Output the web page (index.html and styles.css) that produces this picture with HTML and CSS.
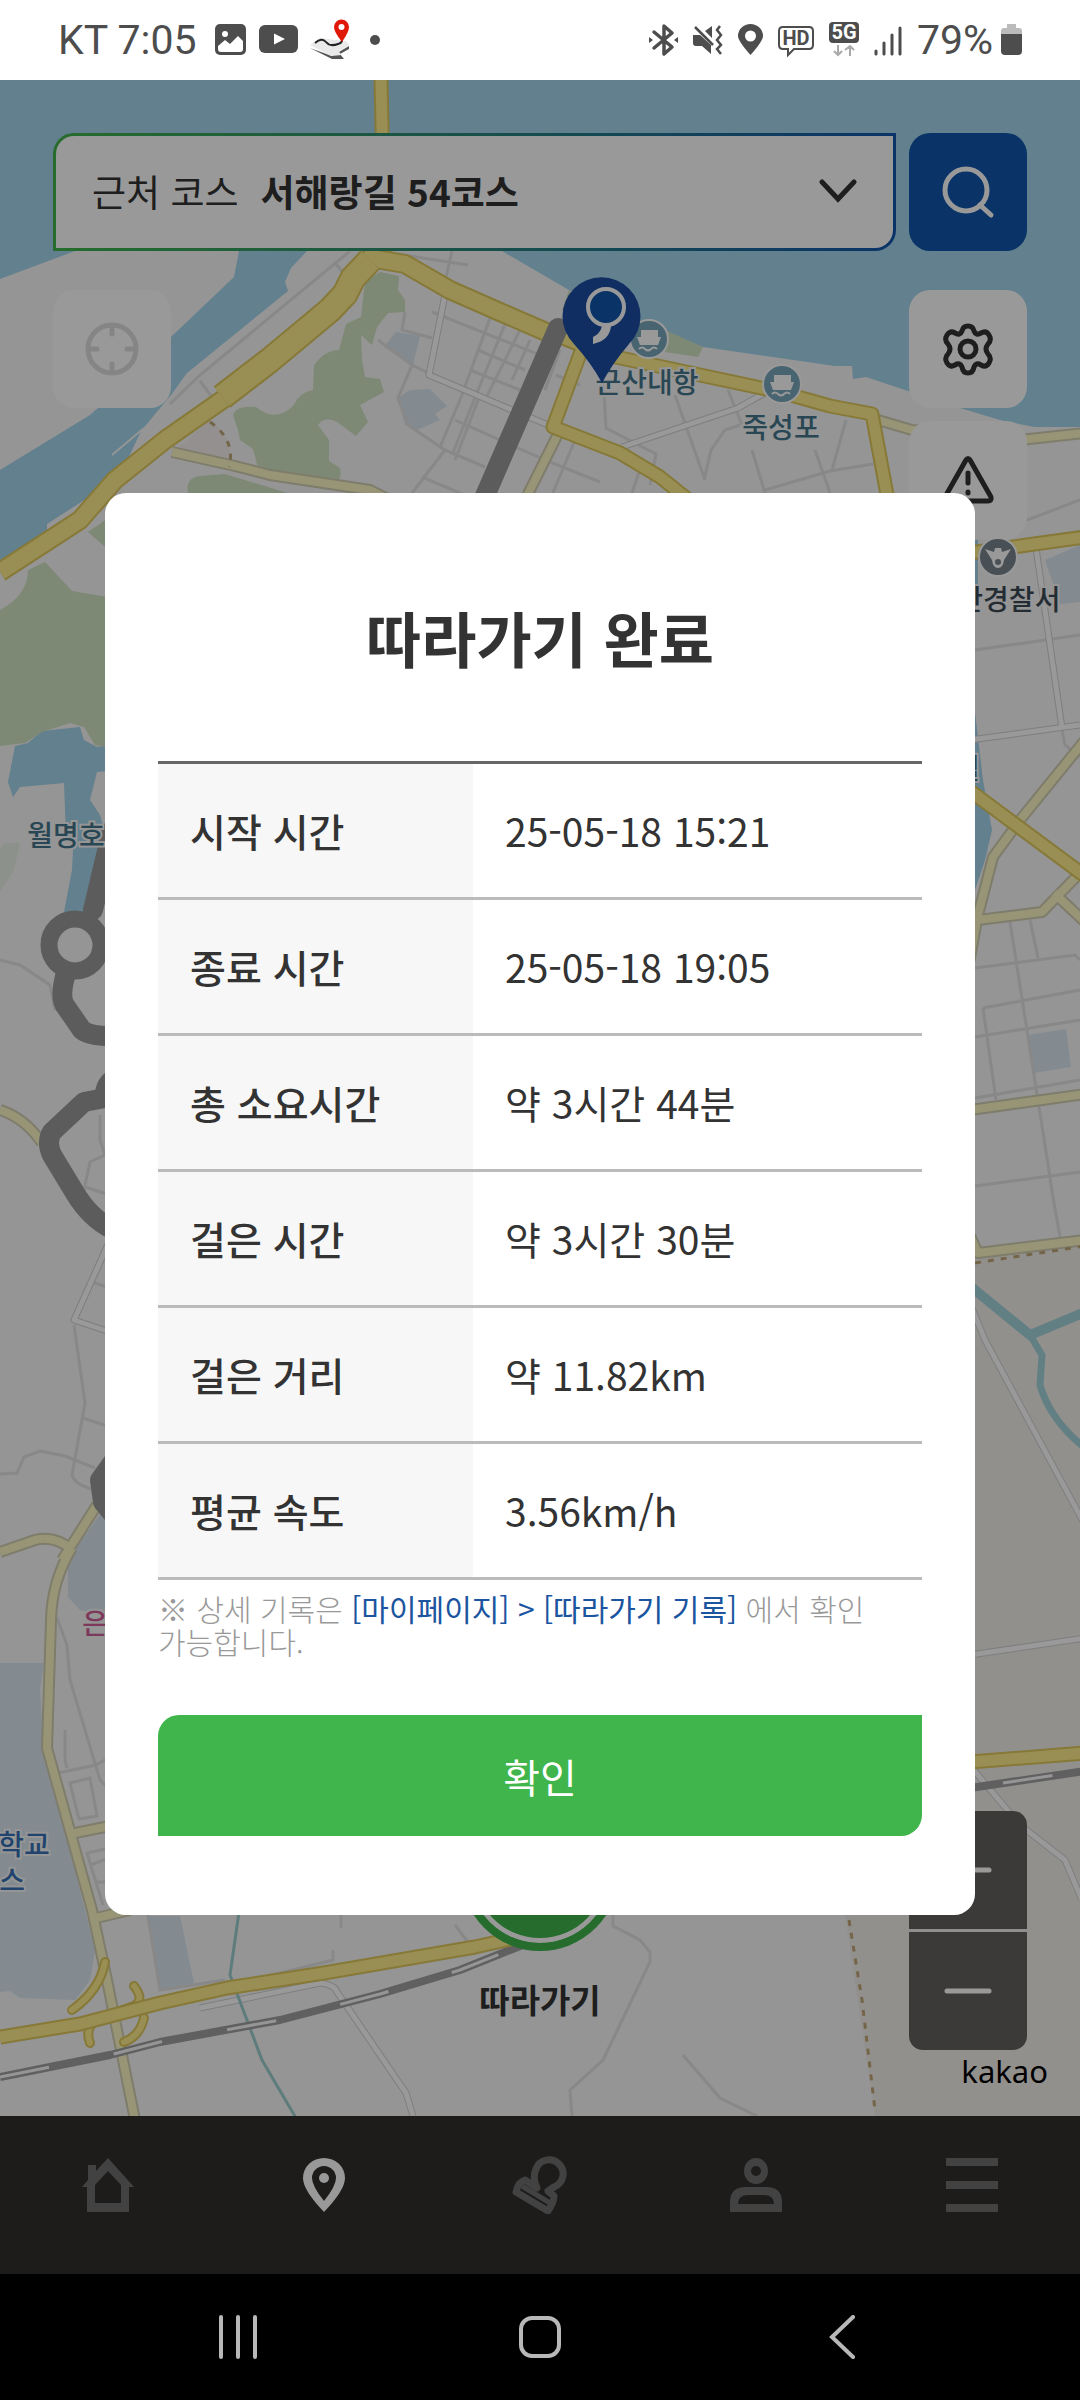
FILE: index.html
```html
<!DOCTYPE html>
<html lang="ko">
<head>
    <meta charset="UTF-8">
    <meta name="viewport" content="width=device-width, initial-scale=1.0">
    <title>따라가기 완료</title>
    <link rel="stylesheet" href="styles.css">
</head>
<body>
    <header class="status">
        <div class="status-group status-left">
            <span>KT 7:05</span>
            <svg width="32" height="36" viewBox="0 0 32 36"><rect x="0" y="2" width="31" height="31" rx="5" fill="#4d4d4d"/><circle cx="10" cy="12" r="3" fill="#fff"/><path d="M3 24l7-6 5 4 8-8 5 5v8q0 3-3 3H6q-3 0-3-3z" fill="#fff"/></svg>
            <svg width="39" height="36" viewBox="0 0 39 36"><rect x="0" y="3" width="39" height="28" rx="6" fill="#4d4d4d"/><path d="M15 11.500l11 5.500-11 5.500z" fill="#fff"/></svg>
            <svg width="40" height="42" viewBox="0 0 40 42"><path d="M0 29l22 11h12l-4-5 9-5v-3L22 37z" fill="#555"/><path d="M0 26l10-7 8 1 18 2 3 4-10 7 3 3-11 1z" fill="#e9e9e9"/><path d="M5 24q7-6 11-1t12 2q4-1 4-4" fill="none" stroke="#222" stroke-width="2"/><path d="M32 23q-8-10-8-15a7.500 7.500 0 0115 0q0 5-7 15z" fill="#e01808"/><circle cx="31.500" cy="8" r="3" fill="#fff"/></svg>
            <svg width="18" height="36" viewBox="0 0 18 36"><circle cx="13" cy="18" r="5" fill="#4d4d4d"/></svg>
        </div>
        <div class="status-group">
            <svg width="29" height="36" viewBox="0 0 29 36"><path d="M5 10l18 15-8 7V4l8 7L5 26" fill="none" stroke="#4d4d4d" stroke-width="3.500" stroke-linejoin="round" stroke-linecap="round"/><path d="M0 15l4 3-4 3zM29 15l-4 3 4 3z" fill="#4d4d4d"/></svg>
            <svg width="30" height="36" viewBox="0 0 30 36"><path d="M0 13h7L18 23v9l-9-8H3q-3 0-3-3zM12 9l7-5v12z" fill="#4d4d4d"/><path d="M2 5l18 18" stroke="#4d4d4d" stroke-width="2.500"/><path d="M27 4l-3 4 4 5-4 5 4 5-4 4 4 5" fill="none" stroke="#4d4d4d" stroke-width="2.500"/></svg>
            <svg width="25" height="36" viewBox="0 0 25 36"><path fill-rule="evenodd" d="M12.500 33Q0 19 0 14a12.500 12 0 0125 0q0 5-12.500 19zm0-13.500a5.500 5.500 0 100-11 5.500 5.500 0 000 11z" fill="#4d4d4d"/></svg>
            <svg width="36" height="36" viewBox="0 0 36 36"><path d="M5 5h26q4 0 4 4v14q0 4-4 4H16l-6 6v-6H5q-4 0-4-4V9q0-4 4-4z" fill="none" stroke="#4d4d4d" stroke-width="2"/><text class="badge-text" x="18" y="23" font-size="20" fill="#4d4d4d">HD</text></svg>
            <svg width="30" height="36" viewBox="0 0 30 36"><rect y="0" width="30" height="21" rx="4" fill="#4d4d4d"/><text class="badge-text" x="15" y="17" font-size="20" fill="#fff">5G</text><path d="M9 23v10M5 29l4 4 4-4M21 34V24M16 28l5-4 4 4" fill="none" stroke="#aaa" stroke-width="2"/></svg>
            <svg width="28" height="36" viewBox="0 0 28 36"><path d="M2 29v3M10 21v11M18 13v19M26 6v26" stroke="#4d4d4d" stroke-width="3" stroke-linecap="round"/></svg>
            <span class="battery">79%
                <svg width="21" height="36" viewBox="0 0 21 36"><path d="M6 2h9v4h3q3 0 3 3v3H0V9q0-3 3-3h3z" fill="#bbb"/><path d="M0 12h21v17q0 4-4 4H4q-4 0-4-4z" fill="#4d4d4d"/></svg>
            </span>
        </div>
    </header>

    <div class="app">
        <main class="map-view">
            <svg class="map" viewBox="0 80 1080 2036" preserveAspectRatio="xMidYMid slice" aria-hidden="true">
                <rect y="80" width="1080" height="2036" fill="#f8f8f8"/>
                <path d="M845 1915V1250H975L1080 1242V2116H875z" fill="#f3f0ec"/>

                <!-- 바다, 강, 호수 -->
                <g class="water">
                    <path d="M0 80H1080V427H1034L1000 420 960 408 908 391 866 377 853 379 852 366 835 366 703 347 665 332 569 290 502 251 400 200 307 251 291 268 285 282 288 291 187 373 171 395 141 431 126 463 106 486 47 524V531L0 560V470L90 415 98 408 171 337 234 277 239 251 230 200 160 215 75 251 0 279z"/>
                    <path d="M8 782L15 746 28 743 42 731 80 727 84 740 97 747 120 744V770L97 772 90 800 100 815 110 850 90 912H64L72 870 73 850 66 835 64 783 20 787 13 797z"/>
                    <path d="M975 712L983 780 992 830 985 860 970 905V540H978V600H970z"/>
                </g>
                <path d="M112 455L144 428" fill="none" stroke="#f8f8f8" stroke-width="2"/>

                <!-- 녹지 -->
                <g class="green">
                    <path d="M365 281L380 272 399 276 398 290 405 300V312L388 313 377 327 372 345 361 335 362 360 365 377 380 379 384 392 360 405 368 422 356 436 337 422Q325 416 318 425L329 440V461L340 468Q342 480 335 483L259 471 253 449 240 440 238 430 233 415Q236 405 256 407 275 423 293 406 300 392 313 390L314 365Q325 350 339 350L346 324 361 317z"/>
                    <path d="M190 500Q182 478 200 476L225 474 310 500z"/>
                    <path d="M88 532L120 510V560zM0 610Q28 595 28 570L45 562 72 591 120 599V750L95 745 84 727 70 723 42 732 25 743 0 746z"/>
                    <path d="M665 330L703 347 698 357 665 352zM569 290L562 310 580 300z"/>
                    <path d="M0 850L5 843H20L14 870 0 892z" opacity=".3"/>
                </g>
                <path d="M176 450L210 420Q236 440 229 467z" fill="#f5f1ee"/>

                <!-- 건물 구역 -->
                <g class="block">
                    <path d="M384 347L396 332 420 336 413 365zM398 398L410 390 430 389 447 406 435 414 440 420 417 430 405 425z"/>
                    <path d="M1045 560L1080 545V602L1060 604zM1028 1035L1066 1029 1071 1067 1034 1073z"/>
                    <path d="M0 1663H44L40 1690 44 1750 50 1770 95 1950 90 1980 75 2000 20 1998 10 1991 0 1992z"/>
                    <path d="M68 1560L110 1500V1617L80 1610 68 1597zM148 1916H180L194 1983 160 1990z"/>
                </g>

                <!-- 골목길 -->
                <g class="lane">
                    <path d="M350 251L200 375 170 404M336 264L345 275M200 381L212 397M397 254L468 265M452 251L445 282M405 312L402 330 432 338M432 312L540 355M378 340L412 365 398 398 408 425 445 450 412 493M412 365L438 378"/>
                    <path d="M490 318L460 400 440 447M505 324L470 410 452 455M520 330L485 400M478 350L525 370M470 370L520 390M455 420L545 460M445 450L485 467M422 477L500 510M530 340L512 380M480 395L455 460"/>
                    <path d="M556 375L580 385M560 350L545 390M545 460L600 482M575 440L552 495M643 460L632 493M604 393L606 428 656 454 650 485M675 395L705 480M740 425L725 430 711 450 704 480M752 450L765 493M846 420L832 470M815 450L830 493M765 490L830 471 873 464M728 390L742 425"/>
                    <path d="M1027 520L1080 500M975 650L1080 635M975 968L1075 955 1080 960M983 1008L1080 990M983 1008L996 1100M1010 922L1052 1190M1030 920L1038 958M975 1037L1080 1020M975 1098L1080 1080M975 1186L1080 1172M1050 1180L1060 1237M1062 730L1065 745 1080 757"/>
                    <path d="M0 960L20 965 50 985 55 1010M100 1115V1140L105 1155 90 1162 84 1190M85 1187L110 1195M92 1282L110 1288M74 1325L85 1403 72 1475Q75 1485 95 1490M83 1418L110 1427M0 1474L17 1473 24 1457 40 1451 65 1456 95 1468"/>
                    <path d="M57 1618L67 1645 70 1680 100 1780 110 1790M65 1730V1760L67 1768M58 1773L96 1765 110 1757M70 1783L90 1778 97 1816 79 1819zM110 1848L87 1853 103 1905M91 1865L108 1858M96 1882H110M147 1910L160 1990 225 1980M341 1915V1928M333 1950V1960L230 1985M455 1925L470 1945"/>
                    <path d="M613 1915V1926L640 1940 650 1952V1962L603 2060 570 2090 572 2116M683 2055L720 2098 757 2116"/>
                </g>

                <!-- 흰색 도로 -->
                <g class="road-white">
                    <path id="white-roads" d="M445 295L429 375 505 407 560 430M622 447L738 408 770 390M1036 548L1062 728M970 740L1080 725M110 1240L74 1320 110 1332M972 1308L985 1340 1085 1525M970 1655L1085 1638M972 1768L1020 1825 1065 1860 1082 1900M200 2008L320 1983Q335 1985 337 1992L406 2093 413 2116"/>
                    <use href="#white-roads" class="fill"/>
                </g>

                <!-- 하천 -->
                <path d="M970 1286L1030 1335 1085 1312" fill="none" stroke="#a3d5dc" stroke-width="10"/>
                <path d="M1030 1335L1042 1355 1040 1385Q1050 1420 1085 1448" fill="none" stroke="#a3d5dc" stroke-width="7"/>
                <path d="M239 1912L230 1975 262 2060 296 2118" fill="none" stroke="#9fcfcf" stroke-width="3"/>

                <!-- 지방도 -->
                <g class="road-pale">
                    <path id="pale-roads" d="M172 452L235 466 270 475 370 490 400 505M560 430L525 500M878 420L912 430 1020 440 1085 433M1085 740L1020 820 993 857 978 915 965 985M978 920L1042 912 1078 875M1054 893L1085 922M970 1110L1085 1094M965 1225L978 1253 1085 1240M0 1110Q25 1118 42 1143M0 1552L35 1540Q55 1535 72 1550M97 1505L62 1560M72 1548Q52 1580 51 1620L47 1748 92 1910 107 1980 135 2120M70 1834L110 1826M92 1919L130 1910"/>
                    <use href="#pale-roads" class="fill"/>
                </g>
                <path d="M975 1263L1085 1246M849 1920L862 2000 875 2110M210 422Q236 440 229 467" fill="none" stroke="#c4a879" stroke-width="3" stroke-dasharray="6 7"/>

                <!-- 철도 -->
                <path class="rail" d="M0 2077L50 2067 110 2055 160 2042 280 2020 380 1994 460 1970 510 1950 600 1915M970 1788L1085 1771"/>
                <path class="rail-dash" d="M0 2077L50 2067 110 2055 160 2042 280 2020 380 1994 460 1970 510 1950 600 1915M1003 1783L1056 1775"/>

                <!-- 국도 -->
                <g class="road-main ramp">
                    <path id="ramps" d="M105 1962Q100 1990 72 2010M134 1986Q145 2000 134 2006L98 2019Q84 2027 90 2043M124 2042Q140 2036 144 2018"/>
                    <use href="#ramps" class="fill"/>
                </g>
                <g class="road-main">
                    <path id="main-roads" d="M381 80L385 260M555 335L583 346 553 427 620 453 660 477 695 505M583 350L700 375 780 392 830 406 872 414 888 500M970 553L1020 546 1085 537M965 787L1085 876M970 1762L1085 1753M0 2037L80 2024 160 2003 227 1988 324 1973 475 1947 515 1938"/>
                    <use href="#main-roads" class="fill"/>
                </g>
                <g class="road-main wide">
                    <path id="wide-roads" d="M0 572L80 520 115 480 165 440 222 400 270 362 330 312 345 296 350 280 370 258 405 264 450 290 500 312 560 338"/>
                    <use href="#wide-roads" class="fill"/>
                </g>
                <g class="road-main widest">
                    <path id="widest-roads" d="M222 397L270 360 330 310 345 294 353 278 370 260"/>
                    <use href="#widest-roads" class="fill"/>
                </g>

                <!-- 코스 경로 -->
                <path class="track" d="M558 328L478 512M112 830L93 910M67 970Q58 998 66 1007L82 1030Q90 1036 110 1036M115 1078Q104 1085 105 1098L84 1102 52 1132Q46 1142 52 1155L75 1193Q90 1218 112 1229M118 1455L100 1480 103 1502 118 1520"/>
                <circle cx="75" cy="945" r="26" fill="#f8f8f8" stroke="#999" stroke-width="17"/>

                <g class="poi">
                    <circle cx="649" cy="339" r="19"/>
                    <path d="M641 330h17v7h3l-3 8h-18l-3-8h4z"/><path class="wave" d="M639 349q3-3 6 0t6 0 6 0"/>
                    <circle cx="782" cy="384" r="19"/>
                    <path d="M774 375h17v7h3l-3 8h-18l-3-8h4z"/><path class="wave" d="M772 394q3-3 6 0t6 0 6 0"/>
                    <circle class="police" cx="998" cy="557" r="19"/>
                    <path d="M985 549l9 3 1-4h6l1 4 9-3-7 11q-1 8-6 8t-6-8z"/><circle class="police-dot" cx="998" cy="562" r="3"/>
                </g>
                <g class="map-label">
                    <text x="647" y="393">군산내항</text>
                    <text x="781" y="438">죽성포</text>
                    <text class="dark" x="996" y="610">군산경찰서</text>
                    <text x="66" y="846">월명호</text>
                    <text x="967" y="779">월</text>
                    <text class="campus" x="24" y="1855">학교</text>
                    <text class="campus" x="12" y="1891">스</text>
                    <text class="pink" x="108" y="1634">은파</text>
                </g>

                <!-- 코스 시작 핀 -->
                <path d="M602 383Q592 364 574 344A39 39 0 11629 344Q612 364 602 383z" fill="#1c4ea3"/>
                <path d="M602 326l9 0q-1 14-18 18v-7q7-3 9-11z" fill="#fff"/>
                <circle cx="606" cy="307" r="18" fill="#1257ad" stroke="#fff" stroke-width="4"/>
            </svg>

            <form class="search-row">
                <div class="course-box">
                    <label for="course">근처 코스</label>
                    <select id="course">
                        <option>서해랑길 54코스</option>
                    </select>
                    <svg width="38" height="24" viewBox="0 0 38 24"><path d="M3 3l16 17L35 3" fill="none" stroke="#333" stroke-width="5" stroke-linecap="round"/></svg>
                </div>
                <button type="button" class="search-btn" aria-label="검색">
                    <svg width="54" height="54" viewBox="0 0 54 54"><circle cx="25" cy="25" r="21" fill="none" stroke="#fff" stroke-width="5"/><path d="M39 40l11 10" stroke="#fff" stroke-width="5" stroke-linecap="round"/></svg>
                </button>
            </form>

            <div class="tools">
                <button type="button" class="tool" aria-label="현재 위치">
                    <svg width="54" height="54" viewBox="0 0 54 54" fill="none" stroke="#dedede" stroke-width="5" stroke-linecap="round"><circle cx="27" cy="27" r="24"/><path d="M27 4v8M27 42v8M4 27h8M42 27h8"/></svg>
                </button>
                <div class="tool-column">
                    <button type="button" class="tool" aria-label="설정">
                        <svg width="54" height="54" viewBox="0 0 54 54" fill="none" stroke="#333" stroke-width="5" stroke-linejoin="round"><path d="M21 9q1-5 6-5t6 5q2 5 7 2 5-3 8 2t-1 9q-4 5 0 10 4 4 1 9t-8 2q-5-3-7 2-1 6-6 6t-6-6q-2-5-7-2-5 3-8-2t1-9q4-5 0-10-4-4-1-9t8-2q5 3 7-2z"/><circle cx="27" cy="27" r="8"/></svg>
                    </button>
                    <button type="button" class="tool" aria-label="신고">
                        <svg width="54" height="54" viewBox="0 0 54 54" fill="none" stroke="#333" stroke-width="5" stroke-linejoin="round" stroke-linecap="round"><path d="M25 7q2-3 4 0l21 37q1 4-3 4H7q-4 0-3-4z"/><path d="M27 20v10M27 39v1"/></svg>
                    </button>
                </div>
            </div>

            <div class="map-bottom">
                <button type="button" class="follow">
                    <span class="follow-circle"></span>
                    따라가기
                </button>
                <div class="zoom">
                    <button type="button" aria-label="확대"><svg width="48" height="48" viewBox="0 0 48 48"><path d="M3 24h42M24 3v42" stroke="#fff" stroke-width="5" stroke-linecap="round"/></svg></button>
                    <button type="button" aria-label="축소"><svg width="48" height="48" viewBox="0 0 48 48"><path d="M3 24h42" stroke="#fff" stroke-width="5" stroke-linecap="round"/></svg></button>
                </div>
            </div>
        </main>

        <nav class="tabbar">
            <a href="#" aria-label="홈"><svg width="56" height="58" viewBox="0 0 56 58"><path fill-rule="evenodd" d="M28 2l26 29h-5v25H7V31H2l6-7V9h8v6zM28 15L15 29v18h26V29z"/></svg></a>
            <a href="#" class="active" aria-label="지도"><svg width="56" height="58" viewBox="0 0 56 58"><path fill-rule="evenodd" d="M28 56Q7 34 7 22a21 20 0 0142 0q0 12-21 34zm0-11q12-15 12-23a12 12 0 00-24 0q0 8 12 23z"/><circle cx="28" cy="22" r="5"/></svg></a>
            <a href="#" aria-label="스탬프"><svg width="56" height="58" viewBox="0 0 56 58" fill="none" stroke="#6e6e6e" stroke-width="7" stroke-linejoin="round"><path d="M25 32Q20 22 24 13A14 14 0 1142 31L36 35 42 40Q42 46 36 55L4 36Q6 26 13 24z"/><path d="M10 30l28 17" stroke-width="5"/></svg></a>
            <a href="#" aria-label="마이페이지"><svg width="56" height="58" viewBox="0 0 56 58"><path fill-rule="evenodd" d="M28 2a12 13 0 110 26 12 13 0 010-26zm0 8a5 5 0 100 10 5 5 0 000-10zM2 56V46q0-15 16-15h20q16 0 16 15v10zm8-8h36q0-9-10-9H20q-10 0-10 9z"/></svg></a>
            <a href="#" aria-label="메뉴"><svg width="56" height="58" viewBox="0 0 56 58"><path d="M2 2h52v8H2zM2 25h52v8H2zM2 48h52v8H2z"/></svg></a>
        </nav>

        <div class="backdrop">
            <div class="modal" role="dialog" aria-labelledby="modalTitle">
                <h1 id="modalTitle">따라가기 완료</h1>
                <table>
                    <tbody>
                        <tr>
                            <th scope="row">시작 시간</th>
                            <td>25-05-18 15:21</td>
                        </tr>
                        <tr>
                            <th scope="row">종료 시간</th>
                            <td>25-05-18 19:05</td>
                        </tr>
                        <tr>
                            <th scope="row">총 소요시간</th>
                            <td>약 3시간 44분</td>
                        </tr>
                        <tr>
                            <th scope="row">걸은 시간</th>
                            <td>약 3시간 30분</td>
                        </tr>
                        <tr>
                            <th scope="row">걸은 거리</th>
                            <td>약 11.82km</td>
                        </tr>
                        <tr>
                            <th scope="row">평균 속도</th>
                            <td>3.56km/h</td>
                        </tr>
                    </tbody>
                </table>
                <p class="note">※ 상세 기록은 <strong>[마이페이지] &gt; [따라가기 기록]</strong> 에서 확인 가능합니다.</p>
                <button type="button" class="confirm">확인</button>
            </div>
        </div>
        <span class="kakao">kakao</span>
    </div>

    <footer class="system-nav">
        <button type="button" aria-label="최근 앱"><svg width="42" height="44" viewBox="0 0 42 44"><path d="M4 2v40M21 2v40M38 2v40"/></svg></button>
        <button type="button" aria-label="홈 화면"><svg width="42" height="44" viewBox="0 0 42 44"><rect x="2" y="3" width="38" height="38" rx="11"/></svg></button>
        <button type="button" aria-label="뒤로"><svg width="42" height="44" viewBox="0 0 42 44"><path d="M32 2L11 22l21 20"/></svg></button>
    </footer>
</body>
</html>
```
FILE: styles.css
```css
* {
    box-sizing: border-box;
}

body {
    margin: 0;
    min-height: 100vh;
    display: flex;
    flex-direction: column;
    font-family: "Noto Sans CJK KR", sans-serif;
    color: #333;
    background-color: #000;
}

button {
    font-family: inherit;
    border: none;
    padding: 0;
    cursor: pointer;
}

svg {
    display: block;
    flex-shrink: 0;
}

/* 상태 표시줄 */
.status {
    height: 80px;
    padding: 0 58px;
    display: flex;
    align-items: center;
    justify-content: space-between;
    background-color: #fff;
    color: #4d4d4d;
    font-family: Roboto, sans-serif;
    font-size: 41px;
    line-height: 44px;
}

.status-group {
    display: flex;
    align-items: center;
    gap: 15px;
}

.status-left {
    gap: 12px;
}

.status-left span {
    margin-right: 6px;
}

.battery {
    display: flex;
    align-items: center;
    gap: 8px;
}

.badge-text {
    font-family: Roboto, sans-serif;
    font-weight: 700;
    text-anchor: middle;
}

/* 지도 화면 */
.app {
    position: relative;
    flex: 1;
    display: flex;
    flex-direction: column;
}

.map-view {
    position: relative;
    flex: 1;
    display: flex;
    flex-direction: column;
    padding: 53px 53px 66px;
    overflow: hidden;
}

.map {
    position: absolute;
    top: 0;
    left: 0;
    width: 100%;
    height: 100%;
}

.water {
    fill: #a3d5ed;
}

.green {
    fill: #d0e4c3;
}

.block {
    fill: #dae7f1;
}

.lane {
    fill: none;
    stroke: #e3e3e3;
    stroke-width: 3;
}

.road-white,
.road-pale,
.road-main,
.rail,
.rail-dash,
.track {
    fill: none;
    stroke-linejoin: round;
}

.road-white {
    stroke: #d2d2d2;
    stroke-width: 7;
}

.road-white .fill {
    stroke: #fff;
    stroke-width: 5;
}

.road-pale {
    stroke: #d3cfb3;
    stroke-width: 12;
}

.road-pale .fill {
    stroke: #fdf9c6;
    stroke-width: 8;
}

.road-main {
    stroke: #e0ca5e;
    stroke-width: 15;
}

.road-main .fill {
    stroke: #ffed8a;
    stroke-width: 11;
}

.road-main.ramp {
    stroke-width: 10;
    stroke-linecap: round;
}

.road-main.ramp .fill {
    stroke-width: 6;
}

.road-main.wide {
    stroke-width: 20;
}

.road-main.wide .fill {
    stroke-width: 16;
}

.road-main.widest {
    stroke-width: 27;
}

.road-main.widest .fill {
    stroke-width: 23;
}

.rail {
    stroke: #a0a0a0;
    stroke-width: 8;
}

.rail-dash {
    stroke: #f8f8f8;
    stroke-width: 3;
    stroke-dasharray: 50 66;
}

.track {
    stroke: #999;
    stroke-width: 20;
    stroke-linecap: round;
}

.poi {
    fill: #fff;
}

.poi circle {
    fill: #78a7bb;
    stroke: #fff;
    stroke-width: 2;
}

.poi .police {
    fill: #78858f;
}

.poi .police-dot {
    fill: #78858f;
    stroke: none;
}

.poi .wave {
    fill: none;
    stroke: #fff;
    stroke-width: 2;
}

.map-label {
    font-size: 28px;
    font-weight: 500;
    text-anchor: middle;
    fill: #43758a;
    stroke: #f8f8f8;
    stroke-width: 4;
    paint-order: stroke;
}

.map-label .dark {
    fill: #3b4a55;
}

.map-label .campus {
    fill: #3672b8;
}

.map-label .pink {
    fill: #d0609a;
}

/* 검색 */
.search-row {
    position: relative;
    display: flex;
    gap: 13px;
}

.course-box {
    flex: 1;
    height: 118px;
    padding: 0 36px 2px;
    display: flex;
    align-items: center;
    border: 3px solid transparent;
    border-radius: 21px 0;
    background: linear-gradient(#fff, #fff) padding-box, linear-gradient(90deg, #3fb54b, #1257ad) border-box;
    font-size: 37px;
}

.course-box select {
    flex: 1;
    margin-left: 22px;
    border: none;
    background: none;
    appearance: none;
    color: #333;
    font-family: inherit;
    font-size: 37px;
    font-weight: 700;
}

.search-btn,
.tool {
    width: 118px;
    height: 118px;
    display: flex;
    align-items: center;
    justify-content: center;
    border-radius: 21px;
}

.search-btn {
    background-color: #1257ad;
}

.tools {
    position: relative;
    display: flex;
    justify-content: space-between;
    align-items: flex-start;
    margin-top: 39px;
}

.tool-column {
    display: flex;
    flex-direction: column;
    gap: 13px;
}

.tool {
    background-color: #fff;
}

.map-bottom {
    position: relative;
    margin-top: auto;
    display: grid;
    grid-template-columns: 1fr auto 1fr;
    align-items: end;
}

.follow {
    grid-column: 2;
    display: flex;
    flex-direction: column;
    align-items: center;
    gap: 26px;
    margin-bottom: 29px;
    background: none;
    color: #333;
    font-size: 33px;
    font-weight: 700;
    line-height: 44px;
}

.follow-circle {
    width: 158px;
    height: 158px;
    border: 8px solid #3fb54b;
    border-radius: 50%;
    background-color: #3fb54b;
    box-shadow: inset 0 0 0 5px #fff;
}

.zoom {
    justify-self: end;
    display: flex;
    flex-direction: column;
    gap: 3px;
    border-radius: 14px;
    overflow: hidden;
    background-color: #eee;
}

.zoom button {
    width: 118px;
    height: 118px;
    display: flex;
    align-items: center;
    justify-content: center;
    background-color: #646260;
}

.kakao {
    position: absolute;
    right: 32px;
    bottom: 181px;
    color: #000;
    font-family: "Noto Sans", sans-serif;
    font-size: 31px;
    line-height: 44px;
}

/* 하단 탭 */
.tabbar {
    height: 158px;
    padding-bottom: 20px;
    display: grid;
    grid-template-columns: repeat(5, 1fr);
    align-items: center;
    justify-items: center;
    background-color: #32302d;
    fill: #6e6e6e;
}

.tabbar .active {
    fill: #fff;
}

/* 완료 팝업 */
.backdrop {
    position: absolute;
    top: 0;
    right: 0;
    bottom: 0;
    left: 0;
    padding: 54px 105px 0;
    display: flex;
    align-items: center;
    background-color: rgba(0, 0, 0, 0.4);
}

.modal {
    flex: 1;
    padding: 100px 53px 79px;
    border-radius: 21px;
    background-color: #fff;
    word-break: keep-all;
}

.modal h1 {
    margin: 0 0 80px;
    font-size: 60px;
    font-weight: 700;
    line-height: 88px;
    text-align: center;
}

.modal table {
    width: 100%;
    border-collapse: collapse;
    border-top: 3px solid #666;
    font-size: 39px;
    line-height: 60px;
    text-align: left;
}

.modal th,
.modal td {
    height: 136px;
    padding: 0 32px 2px;
    border-bottom: 3px solid #bbb;
}

.modal th {
    width: 315px;
    background-color: #f7f7f7;
    font-weight: 500;
}

.note {
    margin: 12px 0 57px;
    color: #999;
    font-size: 30px;
    font-weight: 300;
    line-height: 33px;
}

.note strong {
    color: #1b559f;
    font-weight: 400;
}

.confirm {
    width: 100%;
    height: 121px;
    border-radius: 21px 0;
    background-color: #3fb54b;
    color: #fff;
    font-size: 40px;
}

/* 시스템 내비게이션 */
.system-nav {
    height: 126px;
    padding: 0 87px;
    display: grid;
    grid-template-columns: repeat(3, 1fr);
    align-items: center;
    justify-items: center;
    background-color: #000;
}

.system-nav button {
    background: none;
}

.system-nav svg {
    fill: none;
    stroke: #b8b8b8;
    stroke-width: 4;
    stroke-linecap: round;
}
```
